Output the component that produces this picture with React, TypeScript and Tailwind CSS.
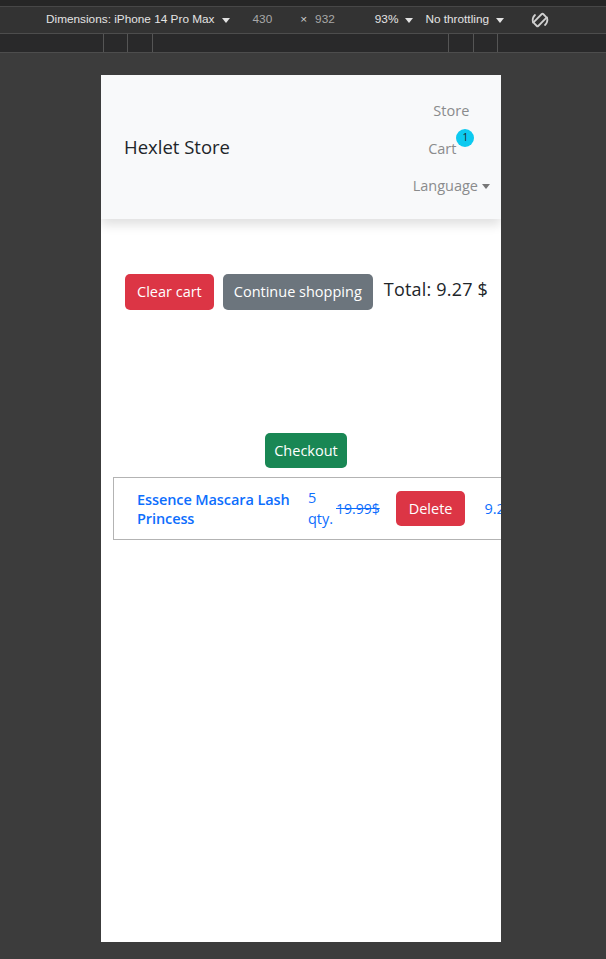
const font = { fontFamily: '"Open Sans", "Noto Sans", Arial, sans-serif' }

function Caret({ className = '' }: { className?: string }) {
  return (
    <svg width="8" height="5" viewBox="0 0 8 5" className={className}>
      <path d="M0 0h8L4 5z" fill="currentColor" />
    </svg>
  )
}

function RotateIcon() {
  return (
    <svg width="20" height="20" viewBox="0 0 20 20" fill="none" stroke="#d0d0d0" strokeWidth="1.8">
      <rect x="7" y="3.5" width="6" height="13" rx="1" transform="rotate(45 10 10)" />
      <path d="M3 12.5a7.5 7.5 0 0 1 2-7.5" strokeLinecap="round" />
      <path d="M17 7.5a7.5 7.5 0 0 1-2 7.5" strokeLinecap="round" />
    </svg>
  )
}

function Toolbar() {
  return (
    <div className="text-[11.8px] text-[#e3e3e3]" style={{ fontFamily: '"Liberation Sans", Arial, sans-serif' }}>
      <div className="h-[7px] bg-[#262626] border-b border-[#474747]" />
      <div className="h-[27px] bg-[#333333] flex items-center border-b border-[#4d4d4d]">
        <span className="ml-[46px] flex items-center gap-[7px]">
          Dimensions: iPhone 14 Pro Max <Caret />
        </span>
        <span className="ml-[23px] text-[#a8a8a8]">430</span>
        <span className="ml-[28px] text-[#cfcfcf]">×</span>
        <span className="ml-[8px] text-[#a8a8a8]">932</span>
        <span className="ml-[40px] flex items-center gap-[7px]">
          93% <Caret />
        </span>
        <span className="ml-[12px] flex items-center gap-[7px]">
          No throttling <Caret />
        </span>
        <span className="ml-[26px] flex items-center">
          <RotateIcon />
        </span>
      </div>
      <div className="h-[19px] bg-[#29292a] flex border-b border-[#4d4d4d]">
        <div className="ml-[103px] w-px bg-[#555]" />
        <div className="ml-[23px] w-px bg-[#555]" />
        <div className="ml-[24px] w-px bg-[#555]" />
        <div className="ml-[295px] w-px bg-[#555]" />
        <div className="ml-[24px] w-px bg-[#555]" />
        <div className="ml-[23px] w-px bg-[#555]" />
      </div>
    </div>
  )
}

function Navbar() {
  return (
    <nav className="h-[144px] bg-[#f8f9fa] shadow-[0_6px_10px_rgba(0,0,0,0.12)] flex items-center justify-between pl-[23px] pr-[11px] relative z-10">
      <span className="text-[18.5px] text-[#212529] font-medium -mt-[1px]">Hexlet Store</span>
      <ul className="flex flex-col items-center text-[14.5px] text-[#8a8b8c] gap-[16px] mt-[3px]">
        <li>Store</li>
        <li className="flex items-start">
          Cart
          <span className="-mt-[9px] w-[18px] h-[18px] rounded-full bg-[#0dcaf0] text-[#212529] text-[10px] flex items-center justify-center">
            1
          </span>
        </li>
        <li className="flex items-center gap-[4px]">
          Language <Caret className="text-[#777]" />
        </li>
      </ul>
    </nav>
  )
}

function Cart() {
  return (
    <div className="pt-[55px]">
      <div className="flex items-center pl-[24px] gap-[9px]">
        <button className="h-[36px] px-[12px] rounded-[5px] bg-[#dc3545] text-white text-[14.5px]">Clear cart</button>
        <button className="h-[36px] px-[11px] rounded-[5px] bg-[#6c757d] text-white text-[14.5px]">Continue shopping</button>
        <span className="text-[18px] font-medium text-[#212529] ml-[2px] -mt-[6px] tracking-[0.2px]">Total: 9.27 $</span>
      </div>
      <div className="flex justify-center mt-[123px] pl-[10px]">
        <button className="h-[35px] px-[9px] rounded-[5px] bg-[#198754] text-white text-[14.5px]">Checkout</button>
      </div>
      <div className="ml-[12px] mt-[9px] w-[420px] h-[63px] border-[1.5px] border-[#b3b3b3] flex items-center text-[14.5px] text-[#0d6efd]">
        <div className="ml-[23px] w-[160px] font-semibold leading-[19px] tracking-[-0.1px]">Essence Mascara Lash Princess</div>
        <div className="ml-[11px] w-[28px] leading-[21px] -mt-[2px]">5 qty.</div>
        <div className="line-through text-[14px]">19.99$</div>
        <button className="ml-[16px] h-[35px] px-[13px] rounded-[5px] bg-[#dc3545] text-white text-[14.5px]">Delete</button>
        <div className="ml-[19px]">9.27$</div>
      </div>
    </div>
  )
}

export default function App() {
  return (
    <div className="w-[606px] h-[959px] bg-[#3c3c3c] overflow-hidden" style={font}>
      <Toolbar />
      <div className="ml-[101px] mt-[22px] w-[400px] h-[867px] bg-white overflow-hidden">
        <Navbar />
        <Cart />
      </div>
    </div>
  )
}
